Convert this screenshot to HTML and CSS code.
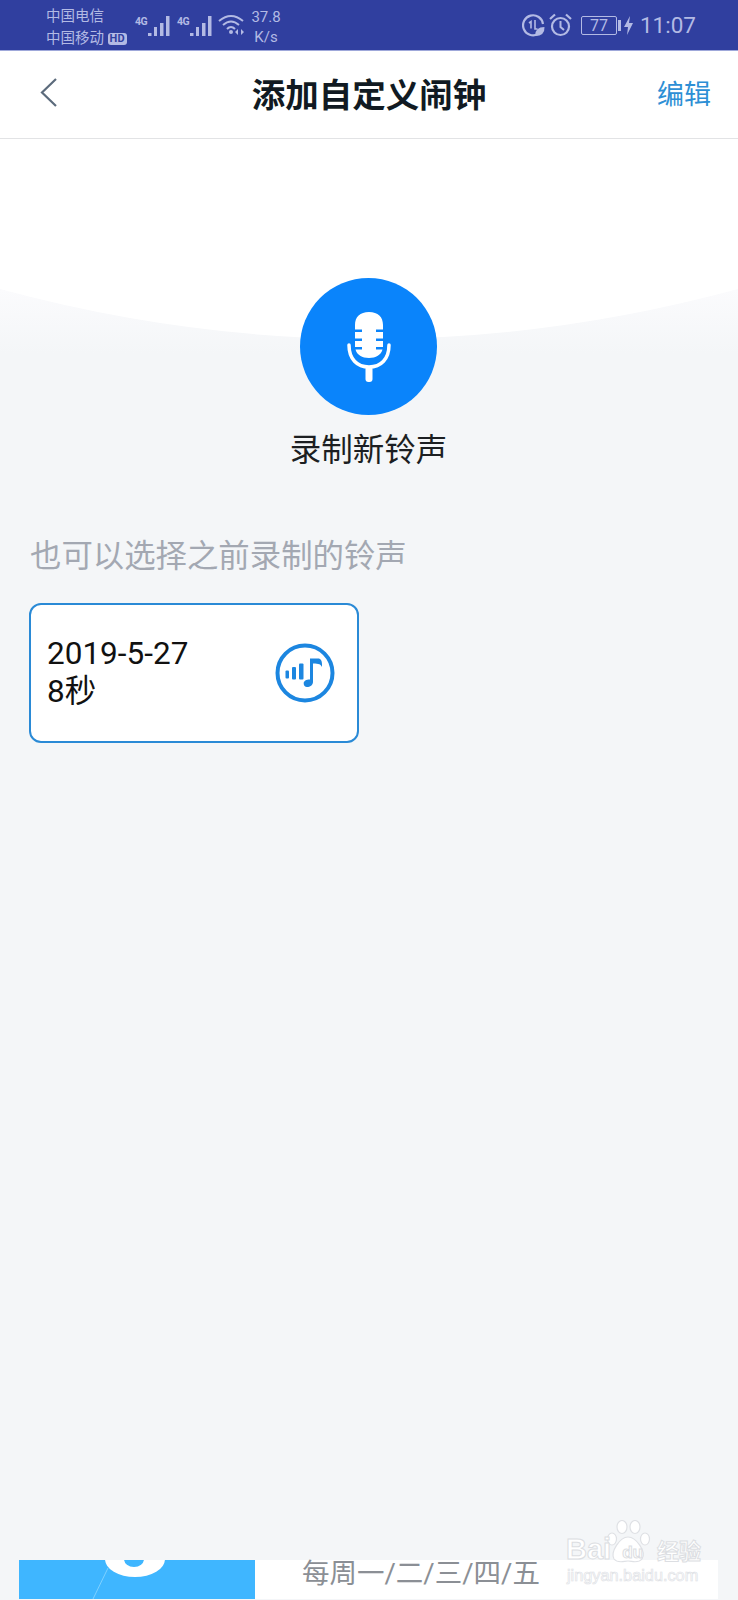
FILE: index.html
```html
<!DOCTYPE html>
<html lang="zh-CN">

<head>
    <meta charset="UTF-8">
    <title>添加自定义闹钟</title>
    <link rel="stylesheet" href="styles.css">
</head>

<body>
    <div class="page">
        <div class="status-bar">
            <div class="carriers">
                <div>中国电信</div>
                <div>中国移动 <span class="hd">HD</span></div>
            </div>
            <div class="signal">
                <span class="net">4G</span>
                <svg width="23" height="22" viewBox="0 0 23 22" fill="currentColor">
                    <rect x="0" y="17" width="3.500" height="3"/><rect x="6" y="11" width="3" height="9"/><rect x="12" y="7" width="3.500" height="13"/><rect x="18" y="0" width="3.500" height="20"/>
                </svg>
            </div>
            <div class="signal">
                <span class="net">4G</span>
                <svg width="23" height="22" viewBox="0 0 23 22" fill="currentColor">
                    <rect x="0" y="17" width="3.500" height="3"/><rect x="6" y="11" width="3" height="9"/><rect x="12" y="7" width="3.500" height="13"/><rect x="18" y="0" width="3.500" height="20"/>
                </svg>
            </div>
            <svg class="wifi" width="28" height="22" viewBox="0 0 28 22" fill="none" stroke="currentColor" stroke-width="2">
                <path d="M1 7 Q13 -3 25 7"/><path d="M5 11 Q13 4 21 11"/><path d="M9 15 Q13 11 17 15"/>
                <circle cx="13" cy="18" r="2" fill="currentColor" stroke="none"/>
                <path d="M20 15 l-3 3 l3 3z M23 21 l3 -3 l-3 -3z" fill="currentColor" stroke="none"/>
            </svg>
            <div class="speed">
                <div>37.8</div>
                <div>K/s</div>
            </div>
            <div class="status-right">
                <svg width="23" height="23" viewBox="0 0 23 23" fill="none" stroke="currentColor" stroke-width="2.200">
                    <path d="M16 20 A10 10 0 1 1 21 10"/>
                    <path d="M7 9 l2 -1.500 v7 M13 6 v9 h2.500" stroke-width="1.600"/>
                    <path d="M13 22 Q13 13 22.500 13 Q23 22 13 22z" fill="currentColor" stroke="none"/>
                </svg>
                <svg class="alarm" width="23" height="24" viewBox="0 0 23 24" fill="none" stroke="currentColor" stroke-width="2.200">
                    <circle cx="11.500" cy="13.500" r="8.500"/>
                    <path d="M11.500 8 v6 l3.500 3" stroke-width="2"/>
                    <path d="M1 6 L6 1.500 M22 6 L17 1.500"/>
                </svg>
                <div class="battery">77</div>
                <span class="battery-cap"></span>
                <svg class="bolt" width="9" height="19" viewBox="0 0 9 19" fill="currentColor">
                    <path d="M6 0 L0 11 H4 L3 19 L9 7 H5z"/>
                </svg>
                <div class="time">11:07</div>
            </div>
        </div>

        <div class="nav-bar">
            <div class="nav-left">
                <svg width="17" height="29" viewBox="0 0 17 29" fill="none" stroke="#5c6b7c" stroke-width="2.200">
                    <path d="M16 1 L2 14.500 L16 28"/>
                </svg>
            </div>
            <h1 class="nav-title">添加自定义闹钟</h1>
            <a class="nav-edit">编辑</a>
        </div>

        <div class="main">
            <svg class="curve" width="738" height="210" viewBox="0 0 738 210" preserveAspectRatio="none">
                <path d="M0 0 H738 V150 Q369 250 0 150z" fill="#fff"/>
            </svg>

            <div class="record">
                <div class="record-btn">
                    <svg width="44" height="70" viewBox="0 0 44 70" fill="#fff">
                        <path d="M22 0 C31 0 36 5 36 13 V17.500 H29 V20 H36 V26.500 H29 V29 H36 V35 H29 V37.500 H35.500 C34 43 29 46 22 46 C15 46 10 43 8.500 37.500 H15 V35 H8 V29 H15 V26.500 H8 V20 H15 V17.500 H8 V13 C8 5 13 0 22 0z"/>
                        <path d="M2 33 C2 47 10 55 22 55 C34 55 42 47 42 33" fill="none" stroke="#fff" stroke-width="3.500" stroke-linecap="round"/>
                        <rect x="18.500" y="54" width="7" height="16" rx="3"/>
                    </svg>
                </div>
                <div class="record-label">录制新铃声</div>
            </div>

            <div class="section-title">也可以选择之前录制的铃声</div>

            <div class="ring-card">
                <div class="ring-info">
                    <div>2019-5-27</div>
                    <div>8秒</div>
                </div>
                <svg width="60" height="60" viewBox="0 0 60 60" fill="#1c86e0">
                    <circle cx="30" cy="30" r="27.500" fill="none" stroke="#1c86e0" stroke-width="4"/>
                    <rect x="10.500" y="27.500" width="3.500" height="8" rx="1"/>
                    <rect x="17" y="24" width="4" height="12.500" rx="1"/>
                    <rect x="24" y="20.500" width="4.500" height="16" rx="1"/>
                    <path d="M35 15.500 H43 C46 15.500 47 18 47 21 V24 C46 21.500 44 20.500 38 20.500 V39 C38 42 35 44 32 44 C30 44 28.700 42.500 28.700 40.500 C28.700 38 31 36.500 35 36.500z"/>
                </svg>
            </div>

            <div class="bottom-strip">
                <div class="strip-pic">
                    <svg width="236" height="39" viewBox="0 0 236 39">
                        <path d="M86 -1 A30 18 0 0 0 146 -1z" fill="#fff"/>
                        <path d="M105 -1 A10 8 0 0 0 125 -1z" fill="#3fb6ff"/>
                        <path d="M89 8 L74 39" stroke="#7ed0ff" stroke-width="1" fill="none"/>
                    </svg>
                </div>
                <div class="strip-text">每周一/二/三/四/五</div>
            </div>

            <div class="watermark">
                <svg class="paw" width="44" height="44" viewBox="0 0 44 44" fill="#fff" stroke="#dfe1e5" stroke-width="1.200">
                    <ellipse cx="5" cy="19" rx="4.500" ry="6"/>
                    <ellipse cx="15" cy="7" rx="5" ry="6.500"/>
                    <ellipse cx="28" cy="7" rx="5" ry="6.500"/>
                    <ellipse cx="38" cy="19" rx="4.500" ry="6"/>
                    <path d="M21 17 C29 17 40 32 35 39 C31 44 25 41 21 41 C17 41 11 44 7 39 C3 32 13 17 21 17z"/>
                </svg>
                <div class="wm-top"><span class="wm-bai">Bai</span><span class="wm-du">du</span><span class="wm-jy">经验</span></div>
                <div class="wm-url">jingyan.baidu.com</div>
            </div>
        </div>
    </div>
</body>

</html>
```

FILE: styles.css
```css
* {
    box-sizing: border-box;
}

body {
    margin: 0;
    font-family: "Roboto", "Noto Sans CJK SC", sans-serif;
    background-color: #f4f6f8;
}

.page {
    width: 738px;
    height: 1600px;
    display: flex;
    flex-direction: column;
    overflow: hidden;
}

/* status bar */
.status-bar {
    height: 51px;
    flex-shrink: 0;
    display: flex;
    align-items: center;
    padding: 0 42px 0 46px;
    background-color: #303f9f;
    border-bottom: 1px solid #9fa8da;
    color: #b3bae4;
}

.carriers {
    width: 89px;
    margin-top: 6px;
    font-size: 14.5px;
    line-height: 22px;
    white-space: nowrap;
}

.hd {
    display: inline-block;
    padding: 0 2px;
    font-size: 11px;
    line-height: 12px;
    font-weight: 700;
    color: #303f9f;
    background-color: #b3bae4;
    border-radius: 3px;
    vertical-align: 1px;
}

.signal {
    display: flex;
    align-items: flex-start;
    width: 42px;
    margin-top: 4px;
}

.net {
    width: 13px;
    flex-shrink: 0;
    font-size: 10.5px;
    line-height: 12px;
    font-weight: 700;
    letter-spacing: -0.5px;
}

.wifi {
    margin-left: -1px;
}

.speed {
    width: 40px;
    margin-top: 4px;
    text-align: center;
    font-size: 15px;
    line-height: 20px;
}

.status-right {
    margin-left: auto;
    display: flex;
    align-items: center;
}

.alarm {
    margin-left: 4px;
}

.battery {
    width: 36px;
    height: 19px;
    margin-left: 9px;
    border: 1px solid #b3bae4;
    border-radius: 2px;
    font-size: 16px;
    line-height: 17px;
    text-align: center;
}

.battery-cap {
    width: 3px;
    height: 11px;
    margin-left: 1px;
    background-color: #b3bae4;
}

.bolt {
    margin-left: 3px;
}

.time {
    margin-left: 7px;
    font-size: 22.5px;
    line-height: 28px;
}

/* nav */
.nav-bar {
    height: 88px;
    flex-shrink: 0;
    display: grid;
    grid-template-columns: 1fr auto 1fr;
    align-items: center;
    padding: 0 27px 5px 40px;
    background-color: #fff;
    border-bottom: 1px solid #e2e3e5;
}

.nav-left {
    display: flex;
    align-items: center;
}

.nav-title {
    margin: 0 0 0 -13px;
    font-size: 33.5px;
    font-weight: 700;
    color: #111a22;
}

.nav-edit {
    justify-self: end;
    font-size: 27px;
    color: #2d8fd5;
}

/* main */
.main {
    position: relative;
    flex: 1;
    display: flex;
    flex-direction: column;
    padding-top: 139px;
    background: linear-gradient(#fbfbfd 150px, #f4f6f8 215px);
}

.curve {
    position: absolute;
    top: 0;
    left: 0;
}

.record {
    position: relative;
    display: flex;
    flex-direction: column;
    align-items: center;
    padding-right: 1px;
}

.record-btn {
    width: 137px;
    height: 137px;
    display: flex;
    align-items: center;
    justify-content: center;
    background-color: #0a84fb;
    border-radius: 50%;
}

.record-label {
    margin-top: 15px;
    font-size: 31.5px;
    line-height: 42px;
    color: #1c1f22;
}

.section-title {
    margin: 62px 0 0 30px;
    font-size: 31.4px;
    line-height: 46px;
    color: #a3a8b2;
}

.ring-card {
    width: 330px;
    height: 140px;
    margin: 23px 0 0 29px;
    padding: 0 22px 0 16px;
    display: flex;
    align-items: center;
    justify-content: space-between;
    background-color: #fff;
    border: 2px solid #2a8ad6;
    border-radius: 12px;
}

.ring-info {
    font-size: 31.5px;
    line-height: 38px;
    color: #111;
}

.bottom-strip {
    width: 699px;
    height: 39px;
    margin: auto 0 1px 19px;
    display: flex;
    background-color: #fff;
}

.strip-pic {
    width: 236px;
    background-color: #3fb6ff;
}

.strip-pic svg {
    display: block;
}

.strip-text {
    margin-left: 47px;
    font-size: 27.5px;
    line-height: 28px;
    color: #8b8f95;
    white-space: nowrap;
}

/* watermark over the bottom corner */
.watermark {
    position: absolute;
    left: 566px;
    top: 1378px;
    width: 136px;
    height: 68px;
    color: #fff;
}

.paw {
    position: absolute;
    left: 41px;
    top: 3px;
}

.wm-top {
    position: absolute;
    left: 0;
    top: 15px;
    display: flex;
    white-space: nowrap;
    -webkit-text-stroke: 1px #dcdee2;
}

.wm-bai {
    font-family: "Liberation Sans", sans-serif;
    font-size: 29px;
    line-height: 34px;
    font-weight: 700;
}

.wm-du {
    position: relative;
    z-index: 1;
    margin-left: 11px;
    padding-top: 9px;
    font-family: "Liberation Sans", sans-serif;
    font-size: 17px;
    line-height: 24px;
    font-weight: 700;
}

.wm-jy {
    margin-left: 14px;
    padding-top: 7px;
    font-size: 22px;
    line-height: 26px;
    font-weight: 700;
}

.wm-url {
    position: absolute;
    left: 1px;
    top: 49px;
    font-family: "Liberation Sans", sans-serif;
    font-size: 16.3px;
    line-height: 18px;
    color: #fff;
    -webkit-text-stroke: 0.7px #e0e2e6;
    white-space: nowrap;
}
```
